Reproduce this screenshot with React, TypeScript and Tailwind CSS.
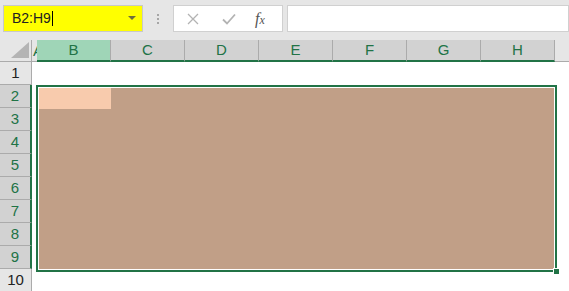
import React from "react";

const cols = ["B", "C", "D", "E", "F", "G", "H"];
const rows = [1, 2, 3, 4, 5, 6, 7, 8, 9, 10];

const App = () => {
  return (
    <div
      className="relative w-[569px] h-[291px] overflow-hidden bg-[#e6e6e6] text-[#222]"
      style={{ fontFamily: '"Liberation Sans", Arial, sans-serif' }}
    >
      {/* formula bar */}
      <div className="flex h-[40px] items-start pt-[5px] pl-[3px]">
        <div className="relative flex h-[27px] w-[140px] items-center border border-[#c8c8c8] bg-[#ffff00] pl-[8px] text-[14px]">
          <span>B2:H9</span>
          <span className="ml-[1px] h-[15px] w-px bg-black" />
          <span className="absolute right-[6px] top-[10px] h-0 w-0 border-l-[4px] border-r-[4px] border-t-[4px] border-l-transparent border-r-transparent border-t-[#6e6e3c]" />
        </div>
        <div className="flex h-[27px] w-[30px] flex-col items-center justify-center gap-[2px]">
          <span className="h-[2px] w-[2px] bg-[#a6a6a6]" />
          <span className="h-[2px] w-[2px] bg-[#a6a6a6]" />
          <span className="h-[2px] w-[2px] bg-[#a6a6a6]" />
        </div>
        <div className="flex h-[27px] w-[110px] items-center border border-[#d0d0d0] bg-white">
          <svg width="12" height="12" viewBox="0 0 12 12" className="ml-[13px]">
            <path d="M1 1 L11 11 M11 1 L1 11" stroke="#b3b3b3" strokeWidth="1.3" />
          </svg>
          <svg width="14" height="12" viewBox="0 0 14 12" className="ml-[23px]">
            <path d="M1 6.5 L5 10.5 L13 1.5" stroke="#b3b3b3" strokeWidth="1.8" fill="none" />
          </svg>
          <span
            className="ml-[19px] text-[16px] italic text-[#555]"
            style={{ fontFamily: '"Liberation Serif", serif' }}
          >
            f<span className="text-[12px]">x</span>
          </span>
        </div>
        <div className="ml-[4px] h-[27px] flex-1 border border-[#d0d0d0] bg-white" />
      </div>

      {/* column headers */}
      <div className="flex h-[22px]">
        <div className="relative w-[32px] border-b border-r border-[#ababab] bg-[#e6e6e6]">
          <svg width="18" height="16" className="absolute bottom-[3px] right-[2px]">
            <polygon points="18,0 18,16 0,16" fill="#b4b4b4" />
          </svg>
        </div>
        <div className="w-[5px] overflow-hidden border-b border-[#ababab] bg-[#e6e6e6] pl-[1px] text-[15px] leading-[22px] text-[#217346]">
          A
        </div>
        {cols.map((c) => (
          <div
            key={c}
            className={`flex w-[74px] items-center justify-center border-b-2 border-r border-b-[#217346] border-r-[#ababab] text-[15px] text-[#217346] ${
              c === "B" ? "bg-[#9fd5b7]" : "bg-[#d2d2d2]"
            }`}
          >
            {c}
          </div>
        ))}
        <div className="flex-1 border-b border-[#ababab] bg-[#e6e6e6]" />
      </div>

      {/* body */}
      <div className="relative flex">
        <div className="w-[32px]">
          {rows.map((r) => {
            const sel = r >= 2 && r <= 9;
            return (
              <div
                key={r}
                className={`flex h-[23px] items-center justify-center text-[15px] ${
                  sel
                    ? "border-b border-r-2 border-b-[#ababab] border-r-[#217346] bg-[#d2d2d2] text-[#217346]"
                    : "border-b border-r border-[#ababab] bg-[#e6e6e6] text-[#222]"
                }`}
              >
                {r}
              </div>
            );
          })}
        </div>
        <div className="h-[230px] flex-1 bg-white" />

        {/* selection */}
        <div className="absolute left-[36px] top-[23px] h-[187px] w-[521px] border-2 border-[#217346]">
          <div className="h-full w-full border border-white bg-[#c19f87]">
            <div className="h-[21px] w-[72px] bg-[#f8cbad]" />
          </div>
          <span className="absolute -bottom-[5px] -right-[5px] h-[7px] w-[7px] border border-white bg-[#217346]" />
        </div>
      </div>
    </div>
  );
};

export default App;
